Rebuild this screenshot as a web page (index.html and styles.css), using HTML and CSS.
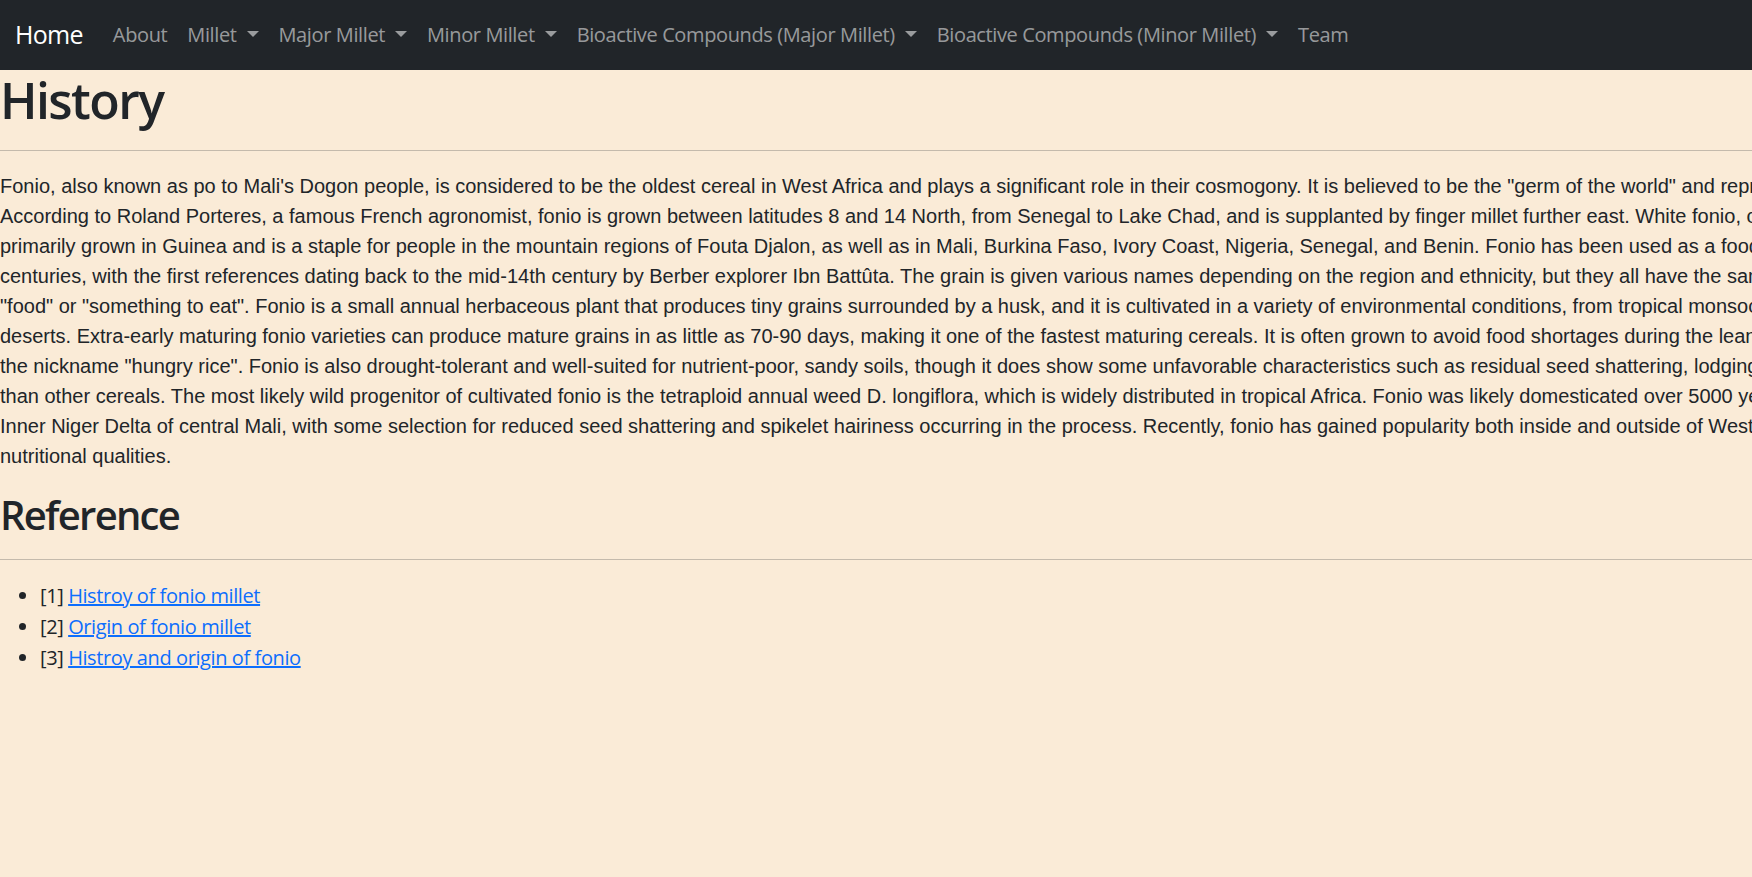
FILE: index.html
```html
<!DOCTYPE html>
<html lang="en">
<head>
<meta charset="utf-8">
<title>History of Fonio Millet</title>
<link rel="stylesheet" href="styles.css">
</head>
<body>
<nav class="navbar">
  <div class="navbar-inner">
    <a class="brand" href="#">Home</a>
    <ul class="nav">
      <li><a class="nav-link" href="#">About</a></li>
      <li><a class="nav-link toggle" href="#">Millet</a></li>
      <li><a class="nav-link toggle" href="#">Major Millet</a></li>
      <li><a class="nav-link toggle" href="#">Minor Millet</a></li>
      <li><a class="nav-link toggle" href="#">Bioactive Compounds (Major Millet)</a></li>
      <li><a class="nav-link toggle" href="#">Bioactive Compounds (Minor Millet)</a></li>
      <li><a class="nav-link" href="#">Team</a></li>
    </ul>
  </div>
</nav>
<main class="content">
  <h1 class="title">History</h1>
  <hr class="rule">
  <p class="history-text">Fonio, also known as po to Mali's Dogon people, is considered to be the oldest cereal in West Africa and plays a significant role in their cosmogony. It is believed to be the "germ of the world" and represents the origin of all things.<br>According to Roland Porteres, a famous French agronomist, fonio is grown between latitudes 8 and 14 North, from Senegal to Lake Chad, and is supplanted by finger millet further east. White fonio, or Digitaria exilis, is<br>primarily grown in Guinea and is a staple for people in the mountain regions of Fouta Djalon, as well as in Mali, Burkina Faso, Ivory Coast, Nigeria, Senegal, and Benin. Fonio has been used as a food for many<br>centuries, with the first references dating back to the mid-14th century by Berber explorer Ibn Battûta. The grain is given various names depending on the region and ethnicity, but they all have the same meaning of<br>"food" or "something to eat". Fonio is a small annual herbaceous plant that produces tiny grains surrounded by a husk, and it is cultivated in a variety of environmental conditions, from tropical monsoon climates to<br>deserts. Extra-early maturing fonio varieties can produce mature grains in as little as 70-90 days, making it one of the fastest maturing cereals. It is often grown to avoid food shortages during the lean season, earning it<br>the nickname "hungry rice". Fonio is also drought-tolerant and well-suited for nutrient-poor, sandy soils, though it does show some unfavorable characteristics such as residual seed shattering, lodging, and lower yields<br>than other cereals. The most likely wild progenitor of cultivated fonio is the tetraploid annual weed D. longiflora, which is widely distributed in tropical Africa. Fonio was likely domesticated over 5000 years ago in the<br>Inner Niger Delta of central Mali, with some selection for reduced seed shattering and spikelet hairiness occurring in the process. Recently, fonio has gained popularity both inside and outside of West Africa due to its<br>nutritional qualities.</p>
  <h2 class="subtitle">Reference</h2>
  <hr class="rule">
  <ul class="refs">
    <li>[1] <a href="#">Histroy of fonio millet</a></li>
    <li>[2] <a href="#">Origin of fonio millet</a></li>
    <li>[3] <a href="#">Histroy and origin of fonio</a></li>
  </ul>
</main>
</body>
</html>
```
FILE: styles.css
```css
html, body {
  margin: 0;
  padding: 0;
  overflow-x: hidden;
}
body {
  background: #faebd7;
  color: #212529;
  font-family: "Open Sans", "Noto Sans", sans-serif;
  font-size: 20px;
  line-height: 1.5;
}
.navbar {
  background: #212529;
  padding: 10px 0;
}
.navbar-inner {
  display: flex;
  align-items: center;
  padding: 0 15px;
}
.brand {
  color: #fff;
  text-decoration: none;
  font-size: 25px;
  letter-spacing: -0.7px;
  line-height: 37.5px;
  padding: 6.25px 0;
  margin-right: 20px;
}
.nav {
  display: flex;
  list-style: none;
  margin: 0;
  padding: 0;
}
.nav-link {
  display: block;
  color: rgba(255, 255, 255, 0.55);
  text-decoration: none;
  padding: 10px 10px;
  line-height: 30px;
  letter-spacing: -0.38px;
}
.toggle::after {
  content: "";
  display: inline-block;
  margin-left: 10px;
  vertical-align: 5px;
  border-top: 6px solid;
  border-right: 6px solid transparent;
  border-left: 6px solid transparent;
  border-bottom: 0;
}
.content {
  padding: 0;
}
.title {
  font-size: 50px;
  font-weight: 600;
  letter-spacing: -1.6px;
  line-height: 1.2;
  margin: 0 0 10px;
}
.subtitle {
  font-size: 40px;
  font-weight: 600;
  letter-spacing: -1.75px;
  line-height: 1.2;
  margin: 0 0 10px;
}
.rule {
  margin: 20px 0;
  border: 0;
  border-top: 1px solid #c4baac;
  height: 0;
}
.history-text {
  font-family: "Liberation Sans", Arial, sans-serif;
  white-space: nowrap;
  margin: 0 0 20px;
}
.refs {
  margin: 0 0 20px;
  padding-left: 40px;
  letter-spacing: -0.4px;
}
.refs li {
  padding-top: 1px;
}
.refs a {
  color: #0d6efd;
}
```
